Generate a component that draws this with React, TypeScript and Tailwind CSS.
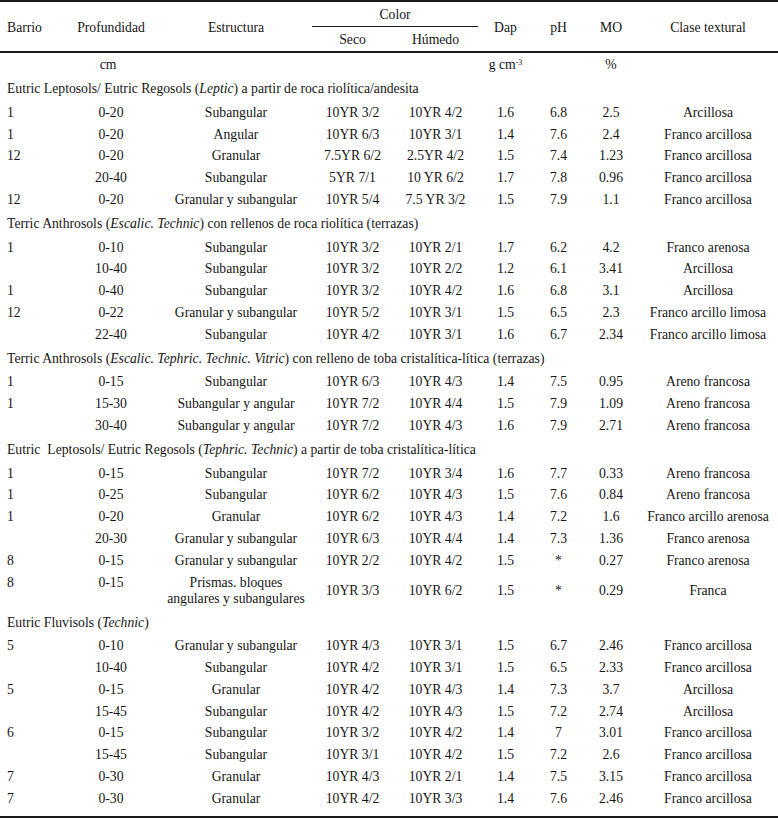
import React from "react";

type Row = {
  barrio: string;
  prof: string;
  estructura: React.ReactNode;
  seco: string;
  humedo: string;
  dap: string;
  ph: string;
  mo: string;
  clase: string;
  tall?: boolean;
};

type Section = {
  title: React.ReactNode;
  rows: Row[];
};

const r = (
  barrio: string,
  prof: string,
  estructura: string,
  seco: string,
  humedo: string,
  dap: string,
  ph: string,
  mo: string,
  clase: string
): Row => ({ barrio, prof, estructura, seco, humedo, dap, ph, mo, clase });

const sections: Section[] = [
  {
    title: (
      <>
        Eutric Leptosols/ Eutric Regosols (<i>Leptic</i>) a partir de roca riolítica/andesita
      </>
    ),
    rows: [
      r("1", "0-20", "Subangular", "10YR 3/2", "10YR 4/2", "1.6", "6.8", "2.5", "Arcillosa"),
      r("1", "0-20", "Angular", "10YR 6/3", "10YR 3/1", "1.4", "7.6", "2.4", "Franco arcillosa"),
      r("12", "0-20", "Granular", "7.5YR 6/2", "2.5YR 4/2", "1.5", "7.4", "1.23", "Franco arcillosa"),
      r("", "20-40", "Subangular", "5YR 7/1", "10 YR 6/2", "1.7", "7.8", "0.96", "Franco arcillosa"),
      r("12", "0-20", "Granular y subangular", "10YR 5/4", "7.5 YR 3/2", "1.5", "7.9", "1.1", "Franco arcillosa"),
    ],
  },
  {
    title: (
      <>
        Terric Anthrosols (<i>Escalic. Technic</i>) con rellenos de roca riolítica (terrazas)
      </>
    ),
    rows: [
      r("1", "0-10", "Subangular", "10YR 3/2", "10YR 2/1", "1.7", "6.2", "4.2", "Franco arenosa"),
      r("", "10-40", "Subangular", "10YR 3/2", "10YR 2/2", "1.2", "6.1", "3.41", "Arcillosa"),
      r("1", "0-40", "Subangular", "10YR 3/2", "10YR 4/2", "1.6", "6.8", "3.1", "Arcillosa"),
      r("12", "0-22", "Granular y subangular", "10YR 5/2", "10YR 3/1", "1.5", "6.5", "2.3", "Franco arcillo limosa"),
      r("", "22-40", "Subangular", "10YR 4/2", "10YR 3/1", "1.6", "6.7", "2.34", "Franco arcillo limosa"),
    ],
  },
  {
    title: (
      <>
        Terric Anthrosols (<i>Escalic. Tephric. Technic. Vitric</i>) con relleno de toba cristalítica-lítica (terrazas)
      </>
    ),
    rows: [
      r("1", "0-15", "Subangular", "10YR 6/3", "10YR 4/3", "1.4", "7.5", "0.95", "Areno francosa"),
      r("1", "15-30", "Subangular y angular", "10YR 7/2", "10YR 4/4", "1.5", "7.9", "1.09", "Areno francosa"),
      r("", "30-40", "Subangular y angular", "10YR 7/2", "10YR 4/3", "1.6", "7.9", "2.71", "Areno francosa"),
    ],
  },
  {
    title: (
      <>
        Eutric{"\u00a0"} Leptosols/ Eutric Regosols (<i>Tephric. Technic</i>) a partir de toba cristalítica-lítica
      </>
    ),
    rows: [
      r("1", "0-15", "Subangular", "10YR 7/2", "10YR 3/4", "1.6", "7.7", "0.33", "Areno francosa"),
      r("1", "0-25", "Subangular", "10YR 6/2", "10YR 4/3", "1.5", "7.6", "0.84", "Areno francosa"),
      r("1", "0-20", "Granular", "10YR 6/2", "10YR 4/3", "1.4", "7.2", "1.6", "Franco arcillo arenosa"),
      r("", "20-30", "Granular y subangular", "10YR 6/3", "10YR 4/4", "1.4", "7.3", "1.36", "Franco arenosa"),
      r("8", "0-15", "Granular y subangular", "10YR 2/2", "10YR 4/2", "1.5", "*", "0.27", "Franco arenosa"),
      {
        barrio: "8",
        prof: "0-15",
        estructura: (
          <>
            Prismas. bloques
            <br />
            angulares y subangulares
          </>
        ),
        seco: "10YR 3/3",
        humedo: "10YR 6/2",
        dap: "1.5",
        ph: "*",
        mo: "0.29",
        clase: "Franca",
        tall: true,
      },
    ],
  },
  {
    title: (
      <>
        Eutric Fluvisols (<i>Technic</i>)
      </>
    ),
    rows: [
      r("5", "0-10", "Granular y subangular", "10YR 4/3", "10YR 3/1", "1.5", "6.7", "2.46", "Franco arcillosa"),
      r("", "10-40", "Subangular", "10YR 4/2", "10YR 3/1", "1.5", "6.5", "2.33", "Franco arcillosa"),
      r("5", "0-15", "Granular", "10YR 4/2", "10YR 4/3", "1.4", "7.3", "3.7", "Arcillosa"),
      r("", "15-45", "Subangular", "10YR 4/2", "10YR 4/3", "1.5", "7.2", "2.74", "Arcillosa"),
      r("6", "0-15", "Subangular", "10YR 3/2", "10YR 4/2", "1.4", "7", "3.01", "Franco arcillosa"),
      r("", "15-45", "Subangular", "10YR 3/1", "10YR 4/2", "1.5", "7.2", "2.6", "Franco arcillosa"),
      r("7", "0-30", "Granular", "10YR 4/3", "10YR 2/1", "1.4", "7.5", "3.15", "Franco arcillosa"),
      r("7", "0-30", "Granular", "10YR 4/2", "10YR 3/3", "1.4", "7.6", "2.46", "Franco arcillosa"),
    ],
  },
];

const cols = "grid grid-cols-[62px_98px_152px_81px_85px_55px_51px_54px_140px]";

function DataRow({ row }: { row: Row }) {
  if (row.tall) {
    return (
      <div className={`${cols} h-[38px] items-center text-center`}>
        <div className="self-start pt-[4px] pl-[7px] text-left">{row.barrio}</div>
        <div className="self-start pt-[4px]">{row.prof}</div>
        <div className="pt-[2px] leading-[16px]">{row.estructura}</div>
        <div className="pt-[2px]">{row.seco}</div>
        <div className="pt-[2px]">{row.humedo}</div>
        <div className="pt-[2px]">{row.dap}</div>
        <div className="pt-[2px]">{row.ph}</div>
        <div className="pt-[2px]">{row.mo}</div>
        <div className="pt-[2px]">{row.clase}</div>
      </div>
    );
  }
  return (
    <div className={`${cols} h-[21.75px] items-center pt-[2px] text-center`}>
      <div className="pl-[7px] text-left">{row.barrio}</div>
      <div>{row.prof}</div>
      <div className="whitespace-nowrap">{row.estructura}</div>
      <div>{row.seco}</div>
      <div>{row.humedo}</div>
      <div>{row.dap}</div>
      <div>{row.ph}</div>
      <div>{row.mo}</div>
      <div className="whitespace-nowrap">{row.clase}</div>
    </div>
  );
}

export default function App() {
  return (
    <div className="w-[778px] bg-white font-['Liberation_Serif','Times_New_Roman',serif] text-[13.7px] leading-[16px] text-[#161616]">
      <div className="border-t-2 border-b-2 border-[#1a1a1a]">
        {/* header */}
        <div className={`${cols} grid-rows-[25px_24px] border-b-2 border-[#1a1a1a] text-center`}>
          <div className="row-span-2 flex items-center pt-[2px] pl-[7px]">Barrio</div>
          <div className="row-span-2 flex items-center justify-center pt-[2px]">Profundidad</div>
          <div className="row-span-2 flex items-center justify-center pt-[2px]">Estructura</div>
          <div className="col-span-2 flex items-center justify-center border-b border-[#1a1a1a] pt-[2px]">Color</div>
          <div className="row-span-2 flex items-center justify-center pt-[2px]">Dap</div>
          <div className="row-span-2 flex items-center justify-center pt-[2px]">pH</div>
          <div className="row-span-2 flex items-center justify-center pt-[2px]">MO</div>
          <div className="row-span-2 flex items-center justify-center pt-[2px]">Clase textural</div>
          <div className="flex items-center justify-center pt-[2px]">Seco</div>
          <div className="flex items-center justify-center pt-[2px]">Húmedo</div>
        </div>

        {/* units */}
        <div className={`${cols} h-[22px] items-center pt-[2px] text-center`}>
          <div />
          <div className="pr-[6px]">cm</div>
          <div />
          <div />
          <div />
          <div>
            g cm<span className="relative top-[-4px] text-[8px] leading-none">-3</span>
          </div>
          <div />
          <div>%</div>
          <div />
        </div>

        <div className="pb-[7px]">
          {sections.map((s, i) => (
            <div key={i}>
              <div className="flex h-[26px] items-center pt-[2px] pl-[7px] whitespace-nowrap">{s.title}</div>
              {s.rows.map((row, j) => (
                <DataRow key={j} row={row} />
              ))}
            </div>
          ))}
        </div>
      </div>
    </div>
  );
}
